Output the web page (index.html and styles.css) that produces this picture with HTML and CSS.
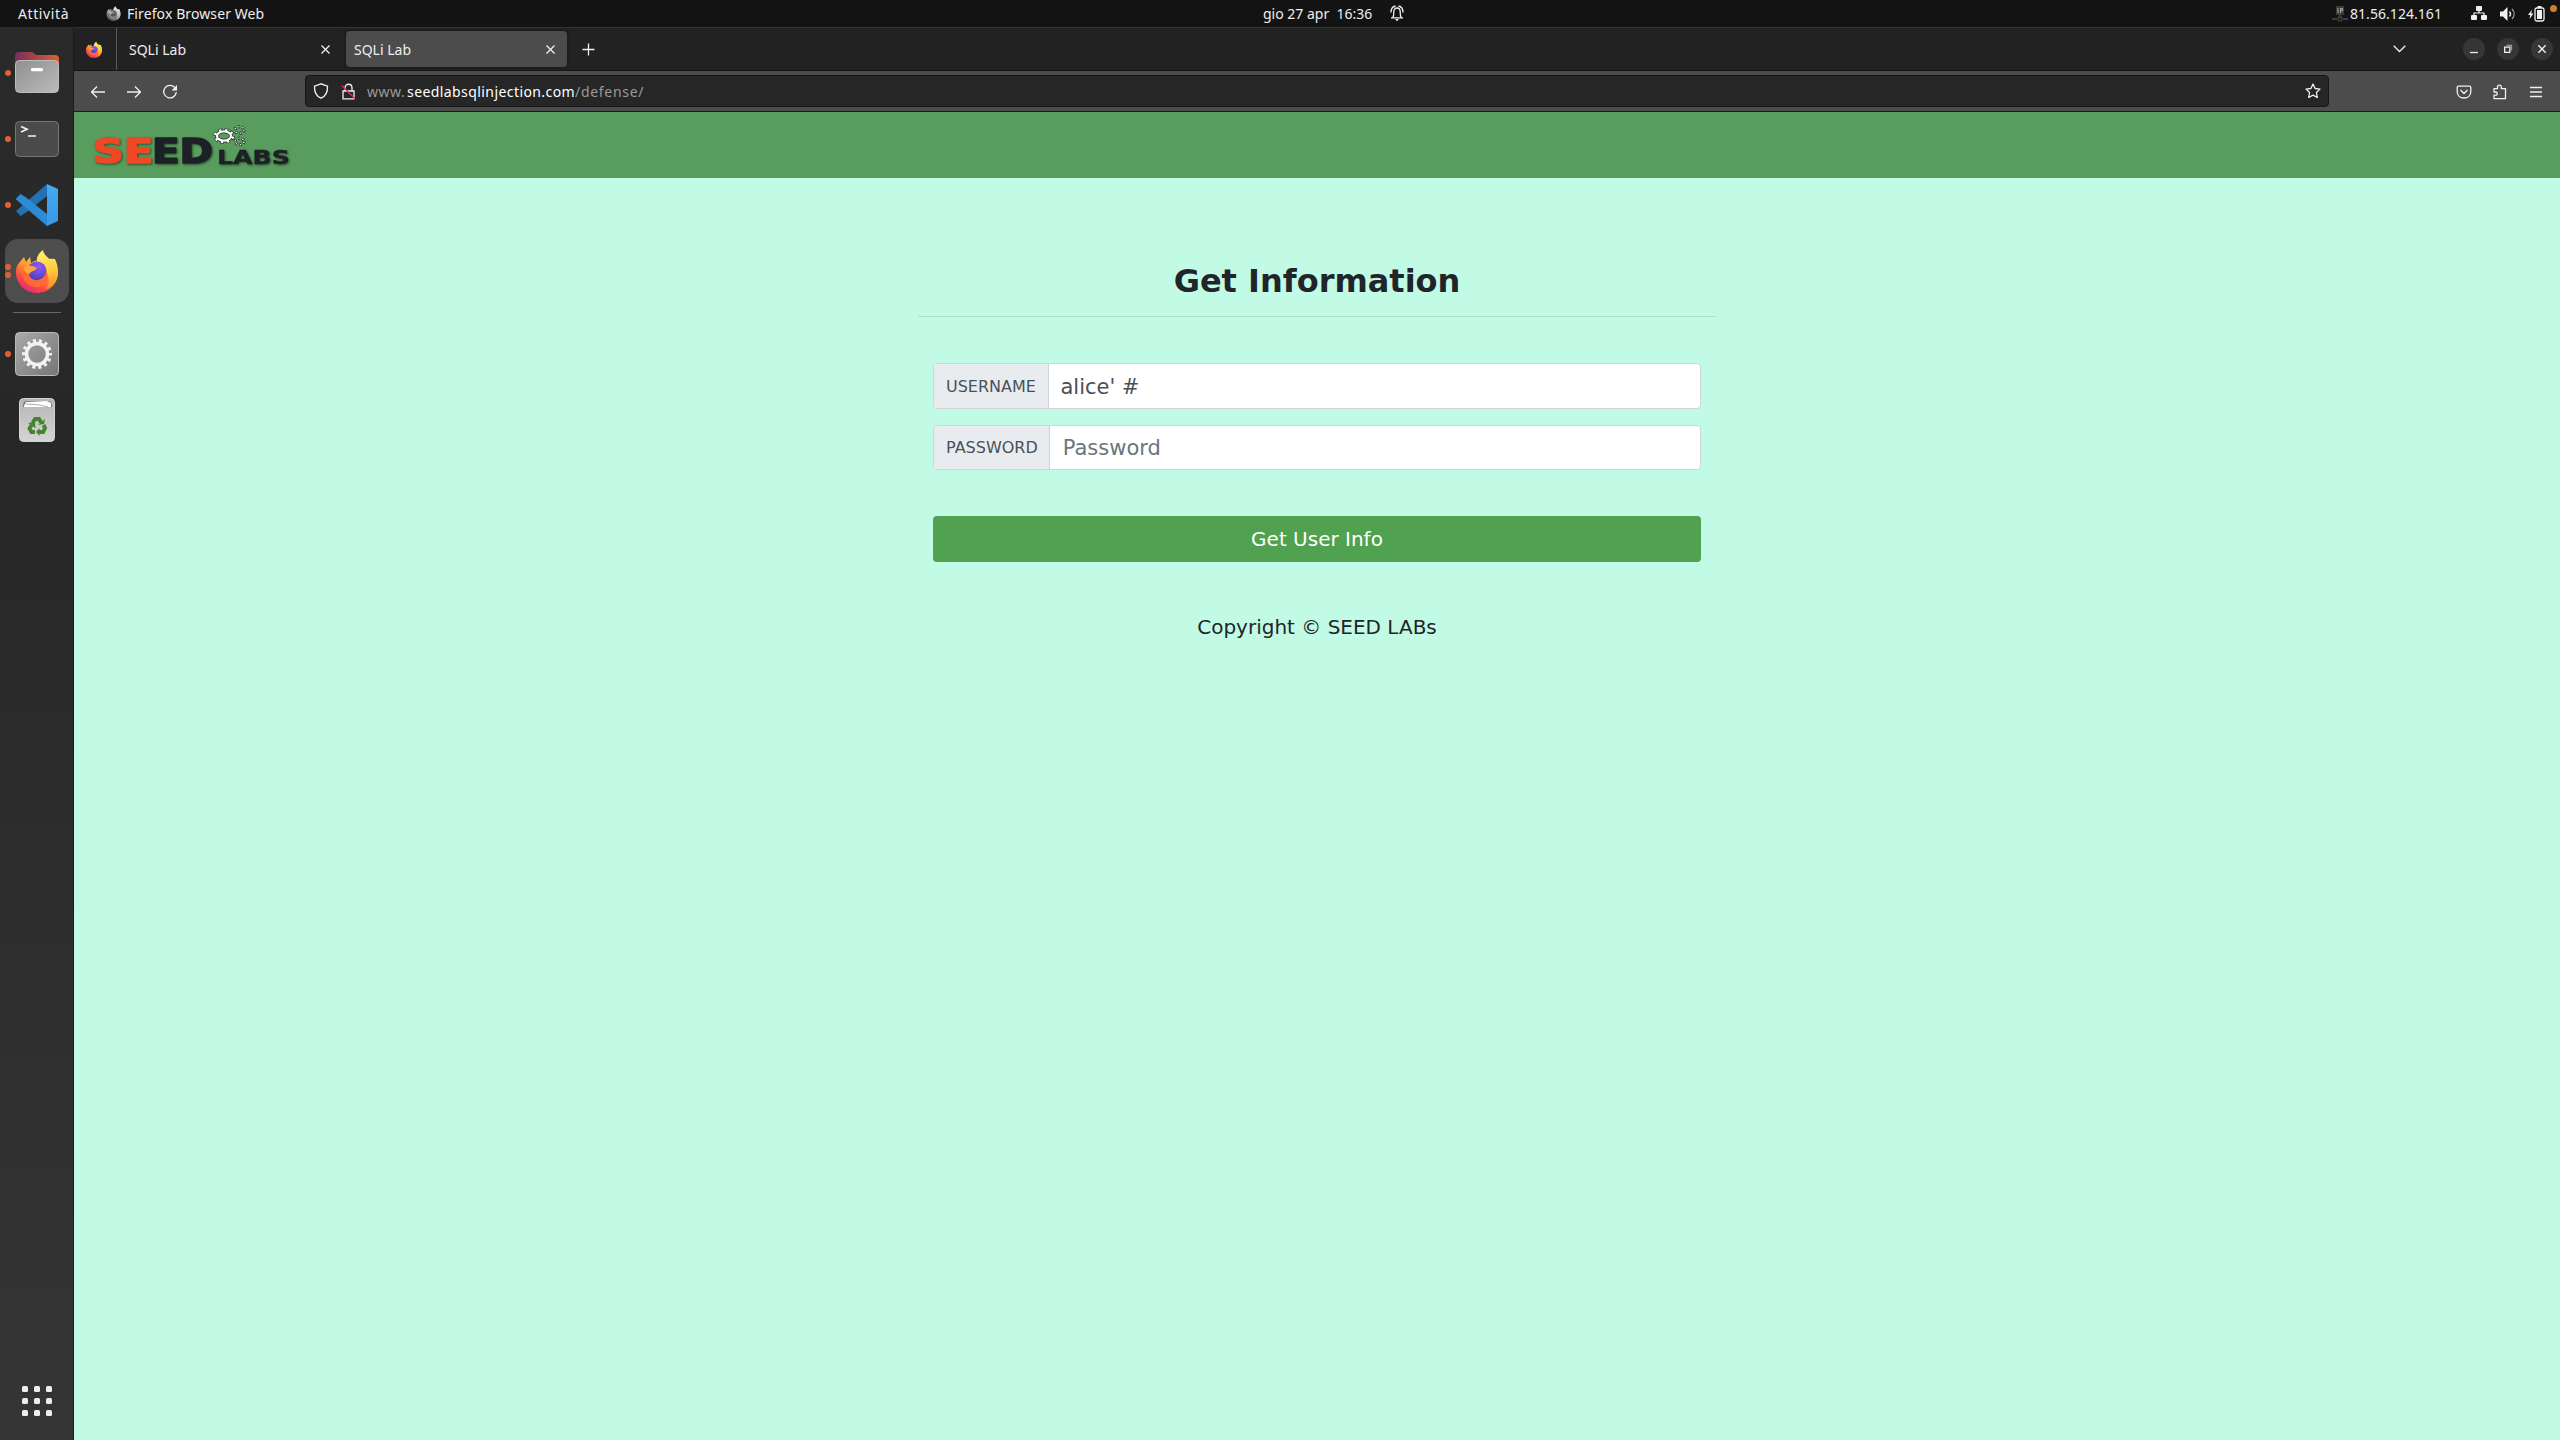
FILE: index.html
```html
<!DOCTYPE html>
<html lang="it">
<head>
<meta charset="utf-8">
<title>SQLi Lab</title>
<link rel="stylesheet" href="styles.css">
</head>
<body>
<svg width="0" height="0" class="defs" aria-hidden="true">
  <defs>
    <linearGradient id="fxBody" x1=".85" y1=".1" x2=".3" y2="1"><stop offset="0" stop-color="#ffe14a"/><stop offset=".4" stop-color="#ff9a2c"/><stop offset=".72" stop-color="#fb4d3e"/><stop offset="1" stop-color="#e22a74"/></linearGradient>
    <linearGradient id="fxFlame" x1=".5" y1="0" x2=".6" y2="1"><stop offset="0" stop-color="#fff36b"/><stop offset=".55" stop-color="#ffc93a"/><stop offset="1" stop-color="#ff8a2b"/></linearGradient>
    <radialGradient id="fxGlobe" cx=".6" cy=".25" r=".8"><stop offset="0" stop-color="#9059ff"/><stop offset="1" stop-color="#4a3fb5"/></radialGradient>
    <linearGradient id="folderBack" x1="0" x2="1"><stop offset="0" stop-color="#75305a"/><stop offset="1" stop-color="#e0602d"/></linearGradient>
    <linearGradient id="silver" x1="0" y1="0" x2="1" y2="1"><stop offset="0" stop-color="#8f8f8f"/><stop offset="1" stop-color="#bbb"/></linearGradient>
    <linearGradient id="steel" x1="0" y1="0" x2="1" y2="1"><stop offset="0" stop-color="#aaa"/><stop offset="1" stop-color="#757575"/></linearGradient>
    <linearGradient id="bin" x1="0" y1="0" x2="0" y2="1"><stop offset="0" stop-color="#b5b5b5"/><stop offset="1" stop-color="#d5d5d5"/></linearGradient>
    <linearGradient id="codeBlade" x1="0" y1="0" x2="0" y2="1"><stop offset="0" stop-color="#47a9ef"/><stop offset="1" stop-color="#3798e8"/></linearGradient>
    <symbol id="firefox" viewBox="0 0 42 44">
      <path fill="url(#fxBody)" d="M3 14 8 8l2 5 4-5 1 6c5-4 17-5 24-4 2 4 3 9 3 13 0 12-9 21-21 21S0 35 0 23c0-4 1-7 3-9Z"/>
      <path fill="url(#fxFlame)" d="M27 1c1 6 6 7 8 12l2-2c3 5 5 9 5 14-1 8-6 13-12 15 4-5 4-13 0-18-3-4-8-6-9-9-1-5 2-9 6-12Z"/>
      <circle cx="21" cy="22" r="9.5" fill="url(#fxGlobe)"/>
      <path fill="#ffa436" d="M8 18c5-3 9-1 13 1-1 2-4 3-6 4-1 1-1 2-3 2-2-1-4-4-4-7Z"/>
      <path fill="#ff6a34" d="M6 22c3 1 4 3 7 3 0 4 5 7 9 6 5-1 8-5 8-9 5 9-2 17-11 16-8-1-13-8-13-16Z"/>
    </symbol>
  </defs>
</svg>

<header class="topbar">
  <div class="topbar-left">
    <span class="activities">Attività</span>
    <svg class="app-icon" viewBox="0 0 42 44"><use href="#firefox"/></svg>
    <span class="app-name">Firefox Browser Web</span>
  </div>
  <div class="topbar-center">
    <span class="clock">gio 27 apr  16:36</span>
    <svg width="14" height="18" viewBox="0 0 14 18" fill="none" stroke="#eee" stroke-width="1.3"><path d="M1 12.8h12M2.8 12.5c1-1.5 1-3.3 1-5.5C3.8 4.500 5 3 7 3s3.200 1.500 3.200 4c0 2.200 0 4 1 5.500M1 7.500C1 4 2 1.700 5.500 1M13 7.500C13 4 12 1.700 8.500 1"/><path d="M5 14h4l-2 2.300Z" fill="#eee" stroke="none"/></svg>
  </div>
  <div class="topbar-right">
    <svg class="ip-icon" width="16" height="16" viewBox="0 0 16 16"><path fill="#3c3c3c" d="M4 0h8v9H4ZM7 9h2v2H7ZM0 12h5v2H0ZM11 12h5v2h-5ZM5.500 10.500h5v5h-5Z"/><path d="M6 2v5M8.500 7V2.500h2v2.200h-2" stroke="#aaa" fill="none"/><path fill="#171717" d="M7 12h2v2H7Z"/></svg>
    <span class="address">81.56.124.161</span>
    <svg class="net-icon" width="16" height="15" viewBox="0 0 16 15" fill="#f0f0f0"><rect x="5" y="0" width="6" height="5" rx="1"/><rect x="0" y="9" width="6" height="5" rx="1"/><rect x="10" y="9" width="6" height="5" rx="1"/><path d="M8 4v3M3 10V7h10v3" fill="none" stroke="#f0f0f0" stroke-width="1.200"/></svg>
    <svg class="sound-icon" width="16" height="14" viewBox="0 0 16 14"><path fill="#f0f0f0" d="M0 4.500h3L7.500 0v14L3 9.500H0Z"/><path d="M9.500 4.500c1.300 1.500 1.300 3.500 0 5" fill="none" stroke="#f0f0f0" stroke-width="1.300"/><path d="M12 2c2.800 3 2.800 7 0 10" fill="none" stroke="#999" stroke-width="1.300"/></svg>
    <svg class="battery-icon" width="17" height="16" viewBox="0 0 17 16"><path fill="#f0f0f0" d="M4 3.500 0 9h2.300L1.500 13l4-5.500H3.200ZM9.500 0h4v2h-4ZM9 4h5v9H9Z"/><rect x="7" y="2" width="9" height="13" rx="1.800" fill="none" stroke="#f0f0f0" stroke-width="1.300"/></svg>
    <span class="notice-dot"></span>
  </div>
</header>

<div class="desktop">
  <nav class="dock">
    <div class="dock-item"><i class="run"></i>
      <svg width="44" height="42" viewBox="0 0 44 42"><path fill="url(#folderBack)" d="M0 4a4 4 0 0 1 4-4h13l4 3h19a4 4 0 0 1 4 4v12H0Z"/><rect x=".5" y="8.500" width="43" height="32" rx="4" fill="url(#silver)" stroke="#bdbdbd"/><rect x="16" y="16" width="12" height="3.200" rx="1.200" fill="#fff"/></svg>
    </div>
    <div class="dock-item"><i class="run"></i>
      <svg width="44" height="36" viewBox="0 0 44 36"><rect x=".5" y=".5" width="43" height="35" rx="4" fill="#4b4b4b" stroke="#777"/><path d="m6 5.500 6 2.700L6 11M13 15h8" fill="none" stroke="#f2f2f2" stroke-width="1.700"/></svg>
    </div>
    <div class="dock-item"><i class="run"></i>
      <svg width="42" height="42" viewBox="0 0 42 42"><path fill="#2272b5" d="m0 27 4.500 5 5-3L31 12V0Z"/><path fill="#2b8bd6" d="M0 14.500 4.500 10l5 3L31 30v12L0 15.500Z"/><path fill="url(#codeBlade)" d="m31 0 11 5v32l-11 5Z"/></svg>
    </div>
    <div class="dock-item active"><i class="run pair-a"></i><i class="run pair-b"></i>
      <svg width="42" height="44"><use href="#firefox"/></svg>
    </div>
    <hr class="dock-rule">
    <div class="dock-item"><i class="run"></i>
      <svg width="44" height="44" viewBox="0 0 44 44"><rect x=".5" y=".5" width="43" height="43" rx="4" fill="url(#steel)" stroke="#bababa"/><circle cx="22" cy="22" r="10.500" fill="none" stroke="#f4f3ef" stroke-width="3.500"/><circle cx="22" cy="22" r="13" fill="none" stroke="#f4f3ef" stroke-width="4" stroke-dasharray="2.900 2.934" stroke-dashoffset="1.450"/></svg>
    </div>
    <div class="dock-item">
      <svg width="36" height="44" viewBox="0 0 36 44"><rect x=".5" y=".5" width="35" height="43" rx="4" fill="url(#bin)" stroke="#d2d2d2"/><path fill="#777" d="M4 9c0-4 1-6 4-6h21c3 0 4 2 4 6Z"/><path fill="#fff" d="M5 8 7 4l21-1 4 2v4H5Z"/><path d="m7 6 14 1 8 2" stroke="#999" fill="none" stroke-width=".8"/><g fill="none" stroke="#43842f" stroke-width="3.800"><path d="m13.500 25 2.500-4h4l2.300 3.800"/><path d="m24.500 27 1.600 3-2 4H20"/><path d="M16 34h-3.500l-2-3.500 2-3.500"/></g><g fill="#43842f"><path d="m19 27 6-1 1-5Z"/><path d="M20.500 30v8L17 34Z"/><path d="m9 25 7-1 .5 6Z"/></g></svg>
    </div>
    <div class="app-grid"><i></i><i></i><i></i><i></i><i></i><i></i><i></i><i></i><i></i></div>
  </nav>

  <main class="window">
    <div class="tabbar">
      <div class="pinned"><svg width="16" height="17" viewBox="0 0 42 44"><use href="#firefox"/></svg></div>
      <div class="tab"><span>SQLi Lab</span><svg class="close" width="9" height="9" viewBox="0 0 9 9"><path d="m.5.5 8 8m0-8-8 8"/></svg></div>
      <div class="tab current"><span>SQLi Lab</span><svg class="close" width="9" height="9" viewBox="0 0 9 9"><path d="m.5.5 8 8m0-8-8 8"/></svg></div>
      <svg class="new-tab" width="13" height="13" viewBox="0 0 13 13"><path d="M6.500.5v12M.5 6.500h12"/></svg>
      <svg class="tab-list" width="13" height="8" viewBox="0 0 13 8"><path d="m.7.7 5.800 5.800L12.300.7"/></svg>
      <div class="window-controls">
        <span><svg width="22" height="22"><path d="M7 14.500h8" stroke-width="1.300"/></svg></span>
        <span><svg width="22" height="22"><path d="M7.700 9.200h5.100v5.100H7.700Z" stroke-width="1.400"/><path d="M9.500 7.500h5v5" class="dim"/></svg></span>
        <span><svg width="22" height="22"><path d="m7.300 7.300 7.400 7.400m0-7.400-7.400 7.400" stroke-width="1.400"/></svg></span>
      </div>
    </div>

    <div class="toolbar">
      <svg width="16" height="16" viewBox="0 0 16 16"><path d="M15 8H1.500M7 2.500 1.500 8 7 13.500"/></svg>
      <svg width="16" height="16" viewBox="0 0 16 16"><path d="M1 8h13.500M9 2.500 14.500 8 9 13.500"/></svg>
      <svg width="16" height="16" viewBox="0 0 16 16"><path d="M12.800 3.500A6.300 6.300 0 1 0 14.300 8"/><path d="M15 1v5.500H9.500Z" fill="#f2f2f2" stroke="none"/></svg>
      <div class="urlbar">
        <svg width="16" height="16" viewBox="0 0 16 16"><path d="M8 .8 1.500 3.200c-.3 6 1.500 9.800 6.500 12 5-2.200 6.800-6 6.500-12Z"/></svg>
        <svg class="lock" width="15" height="17" viewBox="0 0 15 17"><path d="M2 8h11v7.800H2ZM4 8V5c0-5 7-5 7 0v3"/><path d="m.7 2.500 13 13"/></svg>
        <p class="url"><span class="sub">www.</span><span class="host">seedlabsqlinjection.com</span><span class="path">/defense/</span></p>
        <svg class="star" width="16" height="16" viewBox="0 0 16 16"><path d="m8 1 2.100 4.500 4.900.6-3.600 3.400.9 5L8 12.100l-4.300 2.400.9-5L1 6.100l4.900-.6Z" stroke-linejoin="round"/></svg>
      </div>
      <div class="actions">
        <svg width="16" height="16" viewBox="0 0 16 16"><path d="M2.500 2.200h11c.8 0 1.300.5 1.300 1.300v4C14.800 11.500 12 14 8 14S1.200 11.500 1.200 7.500v-4c0-.8.500-1.300 1.300-1.300ZM4.500 6 8 9.500 11.500 6"/></svg>
        <svg width="16" height="16" viewBox="0 0 16 16"><path d="M2 8V4.700h3.500V3c0-2.500 3.800-2.500 3.800 0v1.700h4.200v10H2v-3.500h1.500c2.300 0 2.300-3.200 0-3.200Z" stroke-linejoin="round"/></svg>
        <svg width="16" height="16" viewBox="0 0 16 16"><path d="M2 3.500h12M2 8h12M2 12.500h12"/></svg>
      </div>
    </div>

    <section class="page">
      <div class="navbar">
        <svg class="logo" width="200" height="46" viewBox="0 0 200 46">
          <g class="wordmark">
            <text class="seed red" x="-1.500" y="37" textLength="61" lengthAdjust="spacingAndGlyphs">SE</text>
            <text class="seed" x="58" y="37" textLength="61" lengthAdjust="spacingAndGlyphs">ED</text>
            <text class="labs" x="123" y="37.500" textLength="73" lengthAdjust="spacingAndGlyphs">LABS</text>
          </g>
          <g fill="none">
            <ellipse cx="130" cy="10" rx="9" ry="5.800" stroke="#222" stroke-width="3.600" stroke-dasharray="3.400 2.500"/>
            <ellipse cx="130" cy="10" rx="7" ry="4.600" stroke="#222" stroke-width="3.600"/>
            <ellipse cx="130" cy="10" rx="9" ry="5.800" stroke="#fff" stroke-width="2.600" stroke-dasharray="2.200 3.700" stroke-dashoffset="-.6"/>
            <ellipse cx="130" cy="10" rx="7" ry="4.600" stroke="#fff" stroke-width="2.200"/>
            <g stroke="#222" stroke-width="3"><ellipse cx="145.500" cy="4" rx="4.500" ry="3.300" stroke-dasharray="2.100 2"/><ellipse cx="145.500" cy="15.500" rx="4.500" ry="3.300" stroke-dasharray="2.100 2"/></g>
            <g stroke="#fff" stroke-width="1.500"><ellipse cx="145.500" cy="4" rx="4.500" ry="3.300" stroke-dasharray="1.100 3" stroke-dashoffset="-.5"/><ellipse cx="145.500" cy="15.500" rx="4.500" ry="3.300" stroke-dasharray="1.100 3" stroke-dashoffset="-.5"/></g>
          </g>
        </svg>
      </div>
      <div class="content">
        <h1>Get Information</h1>
        <hr class="rule">
        <form class="login">
          <div class="field user"><label>USERNAME</label><div class="value">alice' #</div></div>
          <div class="field pass"><label>PASSWORD</label><div class="value placeholder">Password</div></div>
          <button type="button" class="submit">Get User Info</button>
        </form>
        <p class="copyright">Copyright © SEED LABs</p>
      </div>
    </section>
  </main>
</div>
</body>
</html>
```
FILE: styles.css
```css
* { box-sizing: border-box; }
body {
  margin: 0;
  width: 2560px;
  height: 1440px;
  overflow: hidden;
  display: flex;
  flex-direction: column;
  background: #131313;
  font: 14px "Noto Sans", "Open Sans", sans-serif;
  color: #eee;
}
svg { display: block; flex: none; }
.defs { position: absolute; }
p, h1, hr { margin: 0; }

/* Desktop top bar */
.topbar {
  flex: none;
  height: 27px;
  display: grid;
  grid-template-columns: 1263px 1fr auto;
  line-height: 27px;
  white-space: pre;
}
.topbar-left, .topbar-center, .topbar-right { display: flex; align-items: center; }
.activities { width: 88px; padding-left: 18px; letter-spacing: .6px; }
.app-icon { width: 15px; height: 15px; filter: grayscale(1); margin-right: 6px; margin-left: 18px; }
.app-name { letter-spacing: .1px; }
.clock { width: 127px; }
.ip-icon { margin-right: 2px; }
.address { width: 121px; letter-spacing: .05px; }
.net-icon { margin-right: 13px; }
.sound-icon { margin-right: 12px; }
.battery-icon { margin-right: 5px; }
.topbar-right { padding-right: 4px; margin-right: -1px; }
.notice-dot { width: 7px; height: 7px; border-radius: 50%; background: #cf7f2c; margin-bottom: 11px; }

.desktop { flex: 1; display: flex; min-height: 0; }

/* Dock */
.dock {
  width: 74px;
  padding-top: 13px;
  display: flex;
  flex-direction: column;
  border-right: 1px solid #1c1c1c;
  background: linear-gradient(180deg, #2a2a2a 0, #272727 30%, #353535 100%);
}
.dock-item { position: relative; height: 66px; display: flex; align-items: center; justify-content: center; padding-left: 1px; flex: none; }
.dock-item.active { height: 64px; margin: 1px 4px 1px 5px; padding: 0; background: #4d4d4d; border-radius: 13px; }
.run { position: absolute; left: 5px; top: 30px; width: 6px; height: 6px; border-radius: 50%; background: #e1602e; }
.active .run { left: 0; }
.active .pair-a { top: 25px; }
.active .pair-b { top: 33px; }
.dock-rule { border: 0; height: 1px; background: #676767; margin: 8px 12px 8px 13px; flex: none; }
.app-grid { margin: auto auto 24px 22px; display: grid; grid-template-columns: repeat(3, 6px); gap: 6px; }
.app-grid i { height: 6px; border-radius: 1.5px; background: #eee; }

/* Browser chrome */
.window { flex: 1; display: flex; flex-direction: column; }
.tabbar { height: 44px; display: flex; align-items: center; background: #222; border-top: 1px solid #353535; border-bottom: 1px solid #151515; flex: none; }
.pinned { width: 43px; height: 100%; border-right: 1px solid #5a5a5a; display: flex; align-items: center; padding-left: 12px; }
.tab { width: 221px; height: 36px; margin: 0 0 0 4px; padding: 0 12px 0 8px; display: flex; align-items: center; justify-content: space-between; border-radius: 4px; line-height: 36px; }
.tab span { padding-top: 1px; }
.current { background: #4c4c4c; box-shadow: 0 0 3px #111; }
.tabbar path, .toolbar path { fill: none; stroke: #f0f0f0; stroke-width: 1.3; }
.tabbar .dim { stroke: #999; }
.new-tab { margin-left: 15px; }
.tab-list { margin-left: auto; margin-right: 57px; }
.window-controls { display: flex; gap: 12px; padding-right: 7px; }
.window-controls span { width: 22px; height: 22px; border-radius: 50%; background: #363636; }
.toolbar { height: 41px; flex: none; display: flex; align-items: center; background: #4c4c4c; border-bottom: 1px solid #1a1a1a; padding: 1px 16px; gap: 20px; padding-bottom: 0; }
.urlbar { width: 2024px; height: 32px; margin: -1px 0 0 107px; border: 1px solid #161616; border-radius: 4px; background: #262626; display: flex; align-items: center; padding: 0 7px; }
.urlbar .lock { margin-left: 12px; }
.urlbar .lock path + path { stroke: #e22850; }
.toolbar path[fill] { fill: #f2f2f2; stroke: none; }
.url { margin-left: 11px; flex: 1; line-height: 30px; display: flex; color: #9a9a9a; padding-top: 1px; }
.sub { width: 40px; letter-spacing: .5px; }
.host { width: 168px; color: #fff; letter-spacing: .42px; }
.path { letter-spacing: .7px; }
.actions { margin-left: auto; display: flex; gap: 20px; }

/* Lab site */
.page { flex: 1; background: #c1fbe6; color: #212529; font-family: "DejaVu Sans", sans-serif; }
.navbar { height: 66px; background: #589d5d; padding: 14px 20px; }
.logo { overflow: visible; }
.logo text { font-family: "DejaVu Sans", sans-serif; font-weight: bold; fill: #1d2027; stroke: #1d2027; stroke-width: 1.6; stroke-linejoin: round; }
.logo .seed { font-size: 33px; }
.logo .labs { font-size: 19.5px; stroke-width: .4; }
.logo .red { fill: #ef4827; stroke: #ef4827; }
.wordmark { filter: drop-shadow(1px 1px 1px rgba(0, 0, 0, .5)); }
.content { width: 798px; margin: 0 auto; padding-top: 79px; }
h1 { font-size: 32px; line-height: 48px; text-align: center; }
.rule { border: 0; height: 1px; background: #ade2cf; margin: 11px 0 46px; }
.login { padding: 0 15px; }
.field { display: flex; border: 1px solid #ced4da; border-radius: 4px; background: #fff; overflow: hidden; }
.user { height: 46px; margin-bottom: 16px; }
.pass { height: 45px; margin-bottom: 46px; }
.field label { font-size: 16px; background: #e9ecef; color: #495057; border-right: 1px solid #ced4da; padding: 0 12px; display: flex; align-items: center; }
.pass label { padding-right: 11px; }
.value { font-size: 21px; color: #495057; padding: 1px 0 0 11.5px; display: flex; align-items: center; }
.placeholder { color: #6c757d; padding: 0 0 0 13px; }
.submit { width: 100%; height: 46px; display: block; border: 0; border-radius: 4px; background: #50a250; color: #fff; font: 20px "DejaVu Sans", sans-serif; }
.copyright { font-size: 20px; line-height: 30px; text-align: center; margin-top: 50px; }
```
